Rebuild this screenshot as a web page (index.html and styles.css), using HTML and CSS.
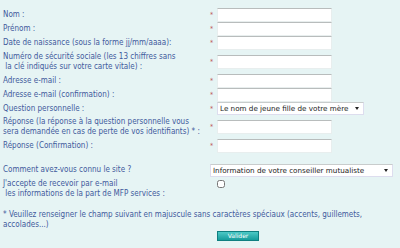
FILE: index.html
```html
<!DOCTYPE html>
<html>
<head>
    <title>Inscription</title>
    <link rel="stylesheet" href="styles.css">
</head>
<body>
    <form class="signup-form">
        <div class="form-row">
            <label class="form-label" for="nom">Nom :</label>
            <div class="form-field"><span class="req">*</span><input type="text" id="nom"></div>
        </div>
        <div class="form-row">
            <label class="form-label" for="prenom">Prénom :</label>
            <div class="form-field"><span class="req">*</span><input type="text" id="prenom"></div>
        </div>
        <div class="form-row">
            <label class="form-label" for="naissance">Date de naissance (sous la forme <u>jj</u>/mm/aaaa):</label>
            <div class="form-field"><span class="req">*</span><input type="text" id="naissance"></div>
        </div>
        <div class="form-row form-row-tall">
            <label class="form-label" for="secu">Numéro de sécurité sociale (les 13 chiffres sans<br>&nbsp;la clé indiqués sur votre carte vitale) :</label>
            <div class="form-field"><span class="req">*</span><input type="text" id="secu"></div>
        </div>
        <div class="form-row">
            <label class="form-label" for="email">Adresse e-mail :</label>
            <div class="form-field"><span class="req">*</span><input type="text" id="email"></div>
        </div>
        <div class="form-row">
            <label class="form-label" for="email2">Adresse e-mail (confirmation) :</label>
            <div class="form-field"><span class="req">*</span><input type="text" id="email2"></div>
        </div>
        <div class="form-row form-row-short">
            <label class="form-label" for="question">Question personnelle :</label>
            <div class="form-field"><span class="req">*</span>
                <span class="select-wrap">
                    <select id="question" class="select-question">
                        <option>Le nom de jeune fille de votre mère</option>
                    </select>
                </span>
            </div>
        </div>
        <div class="form-row form-row-tall">
            <label class="form-label" for="reponse">Réponse (la réponse à la question personnelle vous<br>sera demandée en cas de perte de vos identifiants) * :</label>
            <div class="form-field"><span class="req">*</span><input type="text" id="reponse"></div>
        </div>
        <div class="form-row">
            <label class="form-label" for="reponse2">Réponse (Confirmation) :</label>
            <div class="form-field"><span class="req">*</span><input type="text" id="reponse2"></div>
        </div>

        <div class="form-row form-row-gap">
            <label class="form-label" for="connu">Comment avez-vous connu le site ?</label>
            <div class="form-field">
                <span class="select-wrap">
                    <select id="connu" class="select-connu">
                        <option>Information de votre conseiller mutualiste</option>
                    </select>
                </span>
            </div>
        </div>
        <div class="form-row form-row-tall">
            <label class="form-label" for="optin">J'accepte de recevoir par e-mail<br>&nbsp;les informations de la part de MFP services :</label>
            <div class="form-field form-field-top"><input type="checkbox" id="optin"></div>
        </div>

        <p class="form-note">* Veuillez renseigner le champ suivant en majuscule sans caractères spéciaux (accents, guillemets,<br>accolades...)</p>

        <div class="form-actions">
            <button type="button" class="btn-valider">Valider</button>
        </div>
    </form>
</body>
</html>
```

FILE: styles.css
```css
body {
    margin: 0;
    padding: 8px 0 0 3px;
    background-color: #e6f4f4;
    font-family: "DejaVu Sans Condensed", "DejaVu Sans", sans-serif;
    font-size: 8px;
    color: #3f5a9c;
}
.signup-form {
    width: 395px;
}
.form-row {
    display: flex;
    align-items: center;
    min-height: 14px;
}
.form-row-tall {
    min-height: 24px;
}
.form-row-short {
    min-height: 12px;
}
.form-row-gap {
    margin-top: 10px;
}
.form-label {
    width: 207px;
    line-height: 10px;
    flex-shrink: 0;
}
.form-field {
    display: flex;
    align-items: center;
}
.form-field-top {
    align-self: flex-start;
    padding-top: 3px;
}
.req {
    width: 7px;
    color: #b55;
    font-size: 7px;
}
.form-field input[type="text"] {
    width: 115px;
    height: 14px;
    padding: 0 2px;
    margin: 0;
    border: 1px solid #e8eeee;
    border-top-color: #b8bcbc;
    background-color: #fff;
    box-sizing: border-box;
}
.select-wrap {
    position: relative;
    display: inline-block;
}
.select-wrap::after {
    content: "";
    position: absolute;
    right: 5px;
    top: 5px;
    border-left: 2px solid transparent;
    border-right: 2px solid transparent;
    border-top: 3px solid #222;
    pointer-events: none;
}
.form-field select {
    -webkit-appearance: none;
    appearance: none;
    display: block;
    height: 13px;
    padding: 0 0 0 2px;
    margin: 0;
    border: 1px solid #dde;
    border-top-color: #c8cccc;
    background-color: #fff;
    font-family: "DejaVu Sans", sans-serif;
    font-size: 7.2px;
    line-height: 11px;
    color: #222;
}
.select-question {
    width: 147px;
}
.select-connu {
    width: 183px;
    margin-left: 1px;
}
.form-field input[type="checkbox"] {
    width: 8px;
    height: 8px;
    margin: 0 0 0 7px;
}
.form-note {
    margin: 9px 0 0;
    white-space: nowrap;
    line-height: 10px;
}
.form-actions {
    padding: 1px 0 0 214px;
}
.btn-valider {
    display: block;
    width: 42px;
    height: 10px;
    padding: 0;
    border: 1px solid #0f7f80;
    background: linear-gradient(#4cc9c6, #169c9c);
    color: #fff;
    font-family: "DejaVu Sans", sans-serif;
    font-size: 6px;
    line-height: 8px;
}
```
